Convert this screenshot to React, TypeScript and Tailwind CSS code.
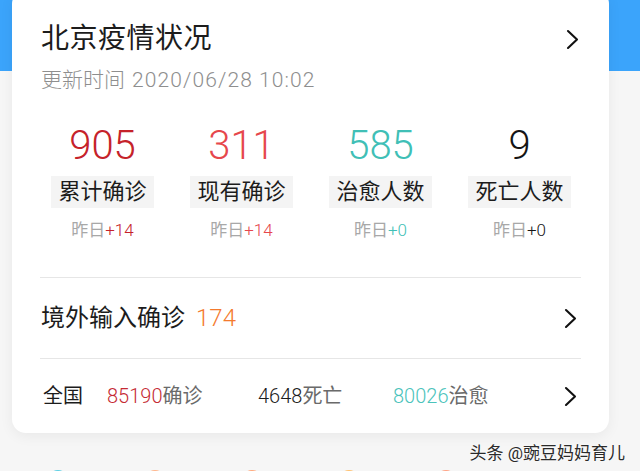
const font = { fontFamily: 'Roboto, "Noto Sans CJK SC", sans-serif' };

type Stat = { value: string; label: string; delta: string; color: string; deltaColor: string };

const stats: Stat[] = [
  { value: "905", label: "累计确诊", delta: "+14", color: "text-[#c5222a]", deltaColor: "text-[#c5222a]" },
  { value: "311", label: "现有确诊", delta: "+14", color: "text-[#e6474c]", deltaColor: "text-[#e6474c]" },
  { value: "585", label: "治愈人数", delta: "+0", color: "text-[#40bfb6]", deltaColor: "text-[#40bfb6]" },
  { value: "9", label: "死亡人数", delta: "+0", color: "text-[#151515]", deltaColor: "text-[#151515]" },
];

function Chevron() {
  return (
    <svg width="13" height="21" viewBox="0 0 13 21" fill="none">
      <polyline points="2,2 11,10.5 2,19" stroke="#111" strokeWidth="2.1" strokeLinecap="round" strokeLinejoin="round" />
    </svg>
  );
}

export default function App() {
  return (
    <div className="w-[640px] h-[471px] overflow-hidden bg-[#f6f6f6]" style={font}>
      <div className="h-[71px] bg-[#3ba4fb]" />
      <div className="-mt-[81px] ml-[12px] w-[597px] rounded-[14px] bg-white pt-[29px] shadow-[0_3px_14px_rgba(0,0,0,0.06)]">
        <div className="flex h-[40px] items-center justify-between pl-[29px] pr-[30px]">
          <span className="text-[28px] leading-none tracking-[0.5px] text-[#1c1c1c]">北京疫情状况</span>
          <Chevron />
        </div>
        <div className="mt-[8px] flex h-[28px] items-center pl-[29px] text-[21px] font-light text-[#8e8e8e]">
          <span>更新时间</span>
          <span className="ml-[7px] tracking-[1.1px]">2020/06/28 10:02</span>
        </div>

        <div className="ml-[21px] mt-[27px] grid w-[556px] grid-cols-4">
          {stats.map((s) => (
            <div key={s.label} className="flex flex-col items-center">
              <div className={`h-[48px] text-[40px] font-light leading-[48px] ${s.color}`}>{s.value}</div>
              <div className="mt-[6px] flex h-[32px] items-center bg-[#f4f4f4] px-[7px] text-[22px] leading-none text-[#1c1c1c]">
                {s.label}
              </div>
              <div className="mt-[10px] flex h-[24px] items-center text-[17px] leading-none">
                <span className="text-[#a8a8a8]">昨日</span>
                <span className={`font-light ${s.deltaColor}`}>{s.delta}</span>
              </div>
            </div>
          ))}
        </div>

        <div className="mx-[28px] mt-[35px]">
          <div className="h-px bg-[#e6e6e6]" />
          <div className="flex h-[80px] items-center justify-between pl-[1px] pr-[4px]">
            <div className="flex items-center text-[24px] leading-none">
              <span className="text-[#1c1c1c]">境外输入确诊</span>
              <span className="ml-[11px] font-light text-[#f47a2e]">174</span>
            </div>
            <Chevron />
          </div>
          <div className="h-px bg-[#e6e6e6]" />
          <div className="flex h-[74px] items-center pl-[3px] pr-[4px] text-[20px] leading-none">
            <span className="w-[64px] text-[#1c1c1c]">全国</span>
            <span className="w-[151px]">
              <span className="font-light text-[#c52a33]">85190</span>
              <span className="text-[#6a6a6a]">确诊</span>
            </span>
            <span className="w-[135px]">
              <span className="font-light text-[#1c1c1c]">4648</span>
              <span className="text-[#6a6a6a]">死亡</span>
            </span>
            <span className="flex-1">
              <span className="font-light text-[#4bc3bb]">80026</span>
              <span className="text-[#6a6a6a]">治愈</span>
            </span>
            <Chevron />
          </div>
        </div>
      </div>

      <div className="mt-[10px] flex justify-end pr-[15px]">
        <span className="text-[17px] leading-[20px] text-[#2a2a2a] [text-shadow:0_0_2px_#fff]">头条 @豌豆妈妈育儿</span>
      </div>

      <div className="mt-[7px] flex gap-[77px] pl-[48px]">
        <div className="h-[20px] w-[20px] rounded-full bg-[#5ccfe4]" />
        <div className="h-[20px] w-[20px] rounded-full bg-[#ffb68c]" />
        <div className="h-[20px] w-[20px] rounded-full bg-[#ffa97c]" />
        <div className="h-[20px] w-[20px] rounded-full bg-[#ffc170]" />
        <div className="h-[20px] w-[20px] rounded-full bg-[#ffa384]" />
      </div>
    </div>
  );
}
